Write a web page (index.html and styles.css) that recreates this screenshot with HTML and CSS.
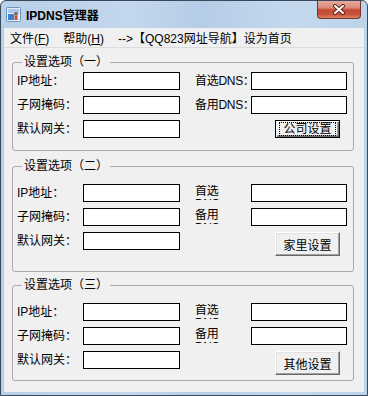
FILE: index.html
```html
<!DOCTYPE html>
<html lang="zh-CN">
<head>
    <meta charset="UTF-8">
    <title>IPDNS管理器</title>
    <link rel="stylesheet" href="styles.css">
</head>
<body>
    <div class="window">
        <div class="titlebar">
            <svg class="app-icon" width="15" height="15" viewBox="0 0 15 15">
                <rect x="0.5" y="0.5" width="14" height="14" rx="1" fill="#e4eef8" stroke="#6b93c0"/>
                <rect x="2" y="7" width="6" height="6" fill="#3f7fcc"/>
                <rect x="2" y="2" width="11" height="4" fill="#a9c8ea"/>
                <circle cx="10" cy="7" r="2" fill="#8a6a48"/>
                <rect x="8.5" y="9" width="3" height="4" fill="#c0503a"/>
            </svg>
            <span class="title">IPDNS管理器</span>
            <div class="close-btn">
                <svg width="14" height="11" viewBox="0 0 14 11">
                    <path d="M3 2 L11 9 M11 2 L3 9" stroke="#5e2418" stroke-width="4" stroke-linecap="round"/>
                    <path d="M3 2 L11 9 M11 2 L3 9" stroke="#fff" stroke-width="2" stroke-linecap="round"/>
                </svg>
            </div>
        </div>

        <div class="client">
            <div class="menubar">
                <span class="menu-item">文件(<u>F</u>)</span>
                <span class="menu-item">帮助(<u>H</u>)</span>
                <span class="menu-item">--&gt;【QQ823网址导航】设为首页</span>
            </div>

            <!-- 设置选项（一） -->
            <fieldset class="group group-one">
                <legend>设置选项（一）</legend>
                <div class="form-grid">
                    <label class="field-label">IP地址：</label>
                    <input class="text-box" type="text">
                    <label class="field-label dns-label">首选DNS：</label>
                    <input class="text-box" type="text">

                    <label class="field-label">子网掩码：</label>
                    <input class="text-box" type="text">
                    <label class="field-label dns-label">备用DNS：</label>
                    <input class="text-box" type="text">

                    <label class="field-label">默认网关：</label>
                    <input class="text-box" type="text">
                    <button class="btn btn-default"><span>公司设置</span></button>
                </div>
            </fieldset>

            <!-- 设置选项（二） -->
            <fieldset class="group group-two">
                <legend>设置选项（二）</legend>
                <div class="form-grid tall-last">
                    <label class="field-label">IP地址：</label>
                    <input class="text-box" type="text">
                    <label class="field-label dns-label clipped">首选DNS：</label>
                    <input class="text-box" type="text">

                    <label class="field-label">子网掩码：</label>
                    <input class="text-box" type="text">
                    <label class="field-label dns-label clipped">备用DNS：</label>
                    <input class="text-box" type="text">

                    <label class="field-label">默认网关：</label>
                    <input class="text-box" type="text">
                    <button class="btn">家里设置</button>
                </div>
            </fieldset>

            <!-- 设置选项（三） -->
            <fieldset class="group group-three">
                <legend>设置选项（三）</legend>
                <div class="form-grid tall-last">
                    <label class="field-label">IP地址：</label>
                    <input class="text-box" type="text">
                    <label class="field-label dns-label clipped">首选DNS：</label>
                    <input class="text-box" type="text">

                    <label class="field-label">子网掩码：</label>
                    <input class="text-box" type="text">
                    <label class="field-label dns-label clipped">备用DNS：</label>
                    <input class="text-box" type="text">

                    <label class="field-label">默认网关：</label>
                    <input class="text-box" type="text">
                    <button class="btn">其他设置</button>
                </div>
            </fieldset>
        </div>
    </div>
</body>
</html>
```

FILE: styles.css
```css
body {
    margin: 0;
    background: #fff;
    font-family: "Liberation Sans", "Noto Sans CJK SC", sans-serif;
    font-size: 12px;
    color: #000;
}
.window {
    width: 368px;
    height: 396px;
    box-sizing: border-box;
    border: 1px solid #3b4857;
    border-radius: 6px 6px 0 0;
    background: linear-gradient(to right, #b8cfe8, #c3d7ed 35%, #b6cde7 55%, #c4d9ee 80%, #bdd3ea);
    display: flex;
    flex-direction: column;
    overflow: hidden;
}
.titlebar {
    height: 27px;
    flex-shrink: 0;
    display: flex;
    align-items: center;
    padding-left: 5px;
}
.app-icon {
    display: block;
}
.title {
    margin-left: 5px;
    font-weight: bold;
}
.close-btn {
    margin-left: auto;
    margin-right: 6px;
    align-self: flex-start;
    width: 42px;
    height: 17px;
    border: 1px solid #7a3328;
    border-top: 0;
    border-radius: 0 0 4px 4px;
    background: linear-gradient(#e7aa9c, #d98b79 40%, #c44a34 52%, #c9543d 80%, #dc8463);
    display: flex;
    align-items: center;
    justify-content: center;
}
.client {
    flex: 1;
    margin: 0 3px 3px 3px;
    background: #f0f0f0;
    display: flex;
    flex-direction: column;
}
.menubar {
    height: 19px;
    flex-shrink: 0;
    display: flex;
    align-items: center;
    gap: 14px;
    padding-left: 6px;
    border-bottom: 1px solid #dcdcdc;
}
.group {
    margin: 0 10px 0 8px;
    padding: 3px 6px 12px 4px;
    border: 1px solid #a9a9a9;
    border-radius: 3px;
    min-width: 0;
}
.group legend {
    margin-left: 5px;
    padding: 0 2px;
    line-height: 14px;
}
.group-one {
    margin-top: 7px;
}
.group-two {
    margin-top: 8px;
    padding-top: 11px;
    padding-bottom: 15px;
}
.group-three {
    margin-top: 6px;
    padding-top: 11px;
    padding-bottom: 5px;
}
.form-grid {
    display: grid;
    grid-template-columns: 66px 97px 71px 96px;
    grid-template-rows: 18px 18px 18px;
    row-gap: 6px;
}
.form-grid.tall-last {
    grid-template-rows: 18px 18px 24px;
}
.field-label {
    height: 18px;
    line-height: 18px;
    white-space: nowrap;
    align-self: start;
}
.dns-label {
    padding-left: 15px;
    letter-spacing: -0.3px;
}
.dns-label.clipped {
    width: 40px;
    height: 15px;
    margin-top: 1px;
    line-height: 13px;
    white-space: normal;
    overflow: hidden;
}
.text-box {
    width: 100%;
    height: 18px;
    box-sizing: border-box;
    margin: 0;
    padding: 0 2px;
    border: 1px solid #000;
    background: #fff;
    font: inherit;
    align-self: start;
}
.btn {
    grid-column: 3 / span 2;
    justify-self: end;
    margin-right: 7px;
    width: 65px;
    height: 24px;
    padding: 0;
    font: inherit;
    color: #000;
    background: #f0f0f0;
    border: 1px solid;
    border-color: #fff #696969 #696969 #fff;
    box-shadow: inset -1px -1px #a0a0a0, inset 1px 1px #e3e3e3;
}
.btn-default {
    height: 18px;
    border-color: #000;
    box-shadow: inset 1px 1px #fff, inset -1px -1px #696969, inset -2px -2px #a0a0a0;
}
.btn-default span {
    display: block;
    margin: 0 3px;
    line-height: 12px;
    border: 1px dotted #000;
}
```
